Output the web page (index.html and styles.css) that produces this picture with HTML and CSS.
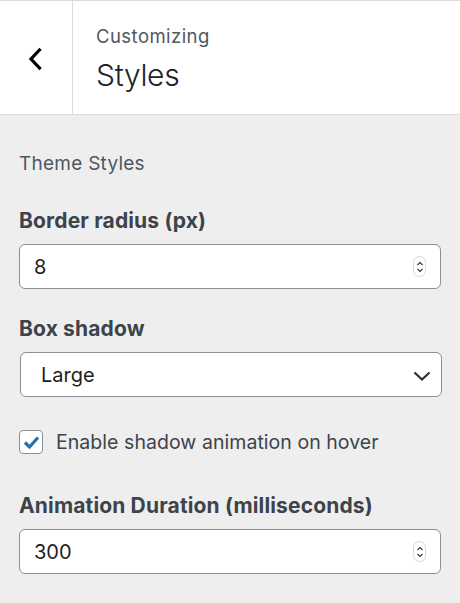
FILE: index.html
```html
<!DOCTYPE html>
<html>
<head>
<meta charset="utf-8">
<link rel="stylesheet" href="styles.css">
</head>
<body>
<div class="panel">
  <header class="head">
    <button class="back" aria-label="Back">
      <svg width="16" height="24" viewBox="0 0 16 24"><path d="M12.5 3 L4 12 L12.5 21" fill="none" stroke="#000" stroke-width="3.2" stroke-linecap="square"/></svg>
    </button>
    <div class="titles">
      <div class="sub">Customizing</div>
      <div class="title">Styles</div>
    </div>
  </header>
  <main class="body">
    <p class="desc">Theme Styles</p>
    <div class="control">
      <label class="label">Border radius (px)</label>
      <div class="field">
        <input class="input" type="text" value="8">
        <span class="spin"><svg width="8" height="16" viewBox="0 0 8 16"><path d="M1.5 6 L4 3.5 L6.5 6 M1.5 10 L4 12.5 L6.5 10" fill="none" stroke="#333" stroke-width="1.1"/></svg></span>
      </div>
    </div>
    <div class="control">
      <label class="label">Box shadow</label>
      <div class="field select">
        <span class="select-val">Large</span>
        <svg class="chev" width="18" height="10" viewBox="0 0 18 10"><path d="M1.5 1.5 L9 8.5 L16.5 1.5" fill="none" stroke="#2c3338" stroke-width="2.2"/></svg>
      </div>
    </div>
    <div class="check-row">
      <span class="checkbox"><svg width="17" height="15" viewBox="0 0 17 15"><path d="M2 7.5 L6.5 12 L15 2.5" fill="none" stroke="#2271b1" stroke-width="3.2"/></svg></span>
      <span class="check-label">Enable shadow animation on hover</span>
    </div>
    <div class="control">
      <label class="label">Animation Duration (milliseconds)</label>
      <div class="field">
        <input class="input" type="text" value="300">
        <span class="spin"><svg width="8" height="16" viewBox="0 0 8 16"><path d="M1.5 6 L4 3.5 L6.5 6 M1.5 10 L4 12.5 L6.5 10" fill="none" stroke="#333" stroke-width="1.1"/></svg></span>
      </div>
    </div>
  </main>
</div>
</body>
</html>
```
FILE: styles.css
```css
* { box-sizing: border-box; }
html, body { margin: 0; padding: 0; }
body {
  background: #eeeeee;
  font-family: Inter, "Noto Sans", sans-serif;
  width: 460px;
  height: 603px;
  overflow: hidden;
}
.head {
  display: flex;
  background: #fff;
  border-top: 1px solid #dcdcde;
  border-bottom: 1px solid #dcdcde;
  height: 115px;
}
.back {
  width: 73px;
  border: 0;
  border-right: 1px solid #dcdcde;
  background: #fff;
  padding: 0;
  display: flex;
  align-items: center;
  justify-content: center;
}
.back svg { margin-top: 2px; margin-left: -3px; }
.titles {
  padding-left: 23px;
  padding-top: 21px;
}
.sub {
  font-size: 18.5px;
  letter-spacing: 0.45px;
  line-height: 28px;
  color: #50575e;
}
.title {
  font-size: 30px;
  font-weight: 300;
  letter-spacing: -0.3px;
  line-height: 40px;
  margin-top: 5px;
  color: #1d2327;
}
.body {
  padding: 0 19px 0 19px;
}
.desc {
  margin: 0;
  padding-top: 36px;
  font-size: 19px;
  letter-spacing: 0.25px;
  line-height: 26px;
  color: #50575e;
}
.control { margin-top: 26px; }
.desc + .control { margin-top: 30px; }
.label {
  display: block;
  font-weight: 700;
  font-size: 21px;
  letter-spacing: 0.15px;
  line-height: 28px;
  color: #3c434a;
}
.field {
  position: relative;
  margin-top: 9px;
  height: 45px;
  width: 422px;
}
.input {
  width: 100%;
  height: 45px;
  border: 1.4px solid #8c8f94;
  border-radius: 6px;
  background: #fff;
  font-family: inherit;
  font-size: 20px;
  color: #1e1e1e;
  padding: 0 14px;
  outline: none;
}
.spin {
  position: absolute;
  right: 15px;
  top: 12px;
  width: 13px;
  height: 21px;
  border: 1px solid #d8d8d8;
  border-radius: 7px;
  display: flex;
  align-items: center;
  justify-content: center;
  background: #fff;
}
.select {
  display: flex;
  align-items: center;
  justify-content: space-between;
  border: 1.4px solid #8c8f94;
  border-radius: 6px;
  background: #fff;
  padding: 0 10px 0 20px;
  margin-left: 1px;
}
.select-val {
  font-size: 20px;
  color: #1e1e1e;
}
.chev { margin-top: 2px; }
.check-row {
  display: flex;
  align-items: center;
  margin-top: 33px;
}
.checkbox {
  width: 24px;
  height: 24px;
  border: 1.4px solid #8c8f94;
  border-radius: 4px;
  background: #fff;
  display: flex;
  align-items: center;
  justify-content: center;
}
.check-label {
  margin-left: 13px;
  font-size: 19.5px;
  letter-spacing: 0.05px;
  color: #3c434a;
}
.check-row + .control { margin-top: 38px; }
```
